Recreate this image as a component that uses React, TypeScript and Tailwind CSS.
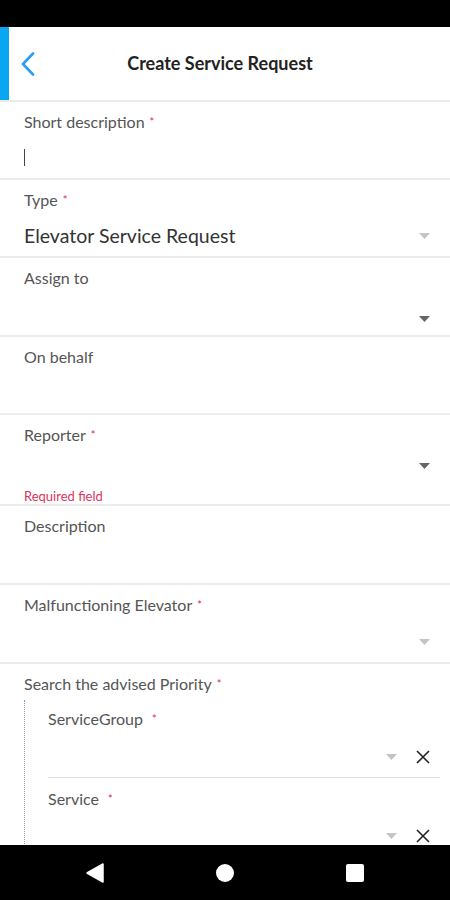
import React from "react";

const Star = () => <span className="text-[#e0245e] text-[11px] align-top ml-[5px]">*</span>;

const Caret = ({ light }: { light?: boolean }) => (
  <svg width="11" height="6" viewBox="0 0 11 6">
    <path d="M0 0 L11 0 L5.5 6 Z" fill={light ? "#c4c4c4" : "#666666"} />
  </svg>
);

const Cross = () => (
  <svg width="16" height="16" viewBox="0 0 16 16">
    <path d="M2 2 L14 14 M14 2 L2 14" stroke="#222" strokeWidth="1.6" />
  </svg>
);

const Label = ({ text, req }: { text: string; req?: boolean }) => (
  <div className="pt-[10px] leading-5 text-[16px] text-[#555]">
    {text}
    {req && <Star />}
  </div>
);

export default function App() {
  return (
    <div className="w-[450px] h-[900px] flex flex-col bg-white overflow-hidden" style={{ fontFamily: "Lato, 'Noto Sans', sans-serif" }}>
      <div className="h-[27px] bg-black shrink-0" />

      <div className="h-[75px] shrink-0 flex border-b-2 border-[#ececec]">
        <div className="w-[9px] bg-[#0aa6f2]" />
        <div className="flex-1 flex items-center pl-[11px] pr-[20px]">
          <svg width="16" height="24" viewBox="0 0 16 24" className="shrink-0">
            <path d="M13 1.5 L3 12 L13 22.5" fill="none" stroke="#2a9df4" strokeWidth="2.6" strokeLinecap="round" strokeLinejoin="round" />
          </svg>
          <div className="flex-1 text-center text-[18px] font-bold text-[#222] pr-[26px]">Create Service Request</div>
        </div>
      </div>

      <div className="flex-1 overflow-hidden">
        <div className="h-[78px] px-6 border-b-2 border-[#ececec]">
          <Label text="Short description" req />
          <div className="mt-[13px] h-[24px] flex items-center">
            <div className="w-px h-[17px] bg-[#444]" />
          </div>
        </div>

        <div className="h-[78px] px-6 pr-[20px] border-b-2 border-[#ececec]">
          <Label text="Type" req />
          <div className="mt-[12px] h-[28px] flex items-center justify-between">
            <span className="text-[19.5px] text-[#333]">Elevator Service Request</span>
            <Caret light />
          </div>
        </div>

        <div className="h-[79px] px-6 pr-[20px] border-b-2 border-[#ececec]">
          <Label text="Assign to" />
          <div className="mt-[19px] h-[24px] flex items-center justify-end">
            <Caret />
          </div>
        </div>

        <div className="h-[78px] px-6 border-b-2 border-[#ececec]">
          <Label text="On behalf" />
        </div>

        <div className="h-[91px] px-6 pr-[20px] border-b-2 border-[#ececec]">
          <Label text="Reporter" req />
          <div className="mt-[9px] h-[24px] flex items-center justify-end">
            <Caret />
          </div>
          <div className="mt-[10px] text-[13px] leading-[16px] text-[#d9365c]">Required field</div>
        </div>

        <div className="h-[79px] px-6 border-b-2 border-[#ececec]">
          <Label text="Description" />
        </div>

        <div className="h-[79px] px-6 pr-[20px] border-b-2 border-[#ececec]">
          <Label text="Malfunctioning Elevator" req />
          <div className="mt-[15px] h-[24px] flex items-center justify-end">
            <Caret light />
          </div>
        </div>

        <div className="px-6 pr-[10px]">
          <Label text="Search the advised Priority" req />
          <div className="mt-[6px] border-l border-dotted border-[#999] pl-[23px]">
            <div className="h-[78px] border-b border-[#e2e2e2]">
              <div className="pt-[9px] leading-5 text-[16px] text-[#555]">
                ServiceGroup<span className="ml-[4px]" /><Star />
              </div>
              <div className="mt-[16px] h-[24px] flex items-center justify-end gap-[18px] pr-[9px]">
                <Caret light />
                <Cross />
              </div>
            </div>
            <div className="h-[80px]">
              <div className="pt-[11px] leading-5 text-[16px] text-[#555]">
                Service<span className="ml-[4px]" /><Star />
              </div>
              <div className="mt-[15px] h-[24px] flex items-center justify-end gap-[18px] pr-[9px]">
                <Caret light />
                <Cross />
              </div>
            </div>
          </div>
        </div>
      </div>

      <div className="h-[55px] shrink-0 bg-black flex items-center justify-center gap-[112px]">
        <svg width="18" height="20" viewBox="0 0 18 20">
          <path d="M17 1 L17 19 L1 10 Z" fill="white" stroke="white" strokeLinejoin="round" strokeWidth="1.5" />
        </svg>
        <div className="w-[18px] h-[18px] rounded-full bg-white" />
        <div className="w-[18px] h-[18px] rounded-[2px] bg-white" />
      </div>
    </div>
  );
}
